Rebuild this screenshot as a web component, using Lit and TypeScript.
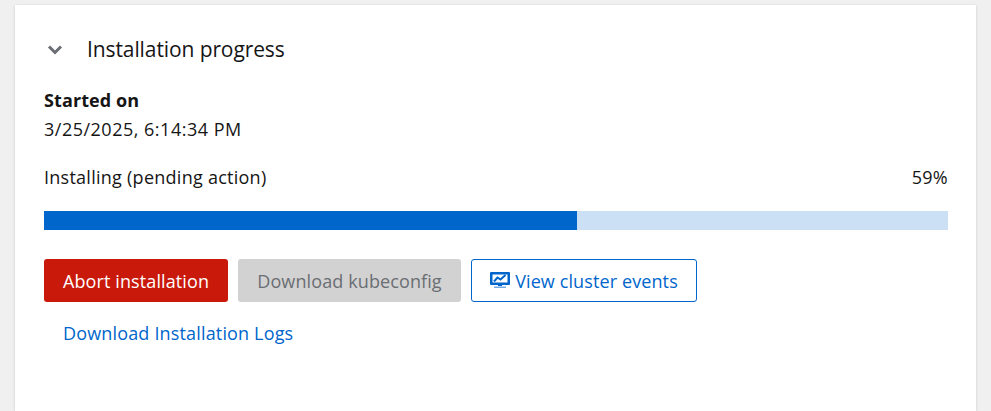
import { LitElement, html, css } from "lit";
import { customElement } from "lit/decorators.js";

@customElement("app-root")
export class AppRoot extends LitElement {
  static styles = css`
    :host { display: block; height: 411px; background: #f0f0f0; overflow: hidden; font-family: "Open Sans", "Noto Sans", sans-serif; color: #151515; font-size: 18px; }
    .page { padding: 5px 15px 0; }
    .card { background: #fff; height: 406px; padding: 0 28px 0 29px; box-sizing: border-box; box-shadow: 0 1px 3px rgba(3,3,3,.12), 0 0 2px rgba(3,3,3,.06); }
    .head { display: flex; align-items: center; height: 29px; padding-top: 30px; }
    .chev { width: 16px; height: 14px; margin-left: 3px; color: #6a6e73; }
    .title { margin-left: 24px; font-size: 21px; line-height: 29px; font-weight: 500; letter-spacing: -.1px; }
    .label { margin-top: 24px; font-weight: 700; font-size: 18px; line-height: 24px; height: 24px; letter-spacing: .1px; }
    .date { margin-top: 5px; line-height: 25px; height: 25px; letter-spacing: .5px; }
    .row { display: flex; justify-content: space-between; margin-top: 23px; line-height: 25px; height: 25px; letter-spacing: .26px; }
    .track { margin-top: 21px; height: 19px; background: #cce0f5; }
    .fill { height: 100%; background: #06c; }
    .btns { display: flex; gap: 10px; margin-top: 29px; }
    .btn { height: 43px; box-sizing: border-box; border-radius: 3px; display: flex; align-items: center; justify-content: center; font-size: 18px; letter-spacing: .11px; }
    .danger { width: 184px; background: #c9190b; color: #fff; }
    .off { width: 223px; background: #d2d2d2; color: #6a6e73; }
    .out { width: 226px; border: 1px solid #06c; color: #06c; gap: 5px; background: #fff; }
    .ico { width: 20px; height: 17px; }
    .link { margin: 19px 0 0 19px; color: #06c; line-height: 25px; letter-spacing: .16px; }
  `;
  render() {
    return html`<div class="page"><div class="card">
      <div class="head">
        <svg class="chev" viewBox="0 0 16 14"><path d="M2 3.5 L8 9.5 L14 3.5" fill="none" stroke="currentColor" stroke-width="3"/></svg>
        <span class="title">Installation progress</span>
      </div>
      <div class="label">Started on</div>
      <div class="date">3/25/2025, 6:14:34 PM</div>
      <div class="row"><span>Installing (pending action)</span><span>59%</span></div>
      <div class="track"><div class="fill" style="width:59%"></div></div>
      <div class="btns">
        <div class="btn danger">Abort installation</div>
        <div class="btn off">Download kubeconfig</div>
        <div class="btn out">
          <svg class="ico" viewBox="0 0 20 17"><path fill="currentColor" fill-rule="evenodd" d="M1 0h18a1 1 0 0 1 1 1v11a1 1 0 0 1-1 1H1a1 1 0 0 1-1-1V1a1 1 0 0 1 1-1zm1.5 2.5v8h15v-8z"/><path fill="none" stroke="currentColor" stroke-width="2" d="M4 9.5l3.5-4 3 2 5-4.5"/><path fill="currentColor" d="M8 13h4v1h-4z"/><path fill="currentColor" opacity=".55" d="M4 14.5h12V16H4z"/></svg>
          <span>View cluster events</span>
        </div>
      </div>
      <div class="link">Download Installation Logs</div>
    </div></div>`;
  }
}
